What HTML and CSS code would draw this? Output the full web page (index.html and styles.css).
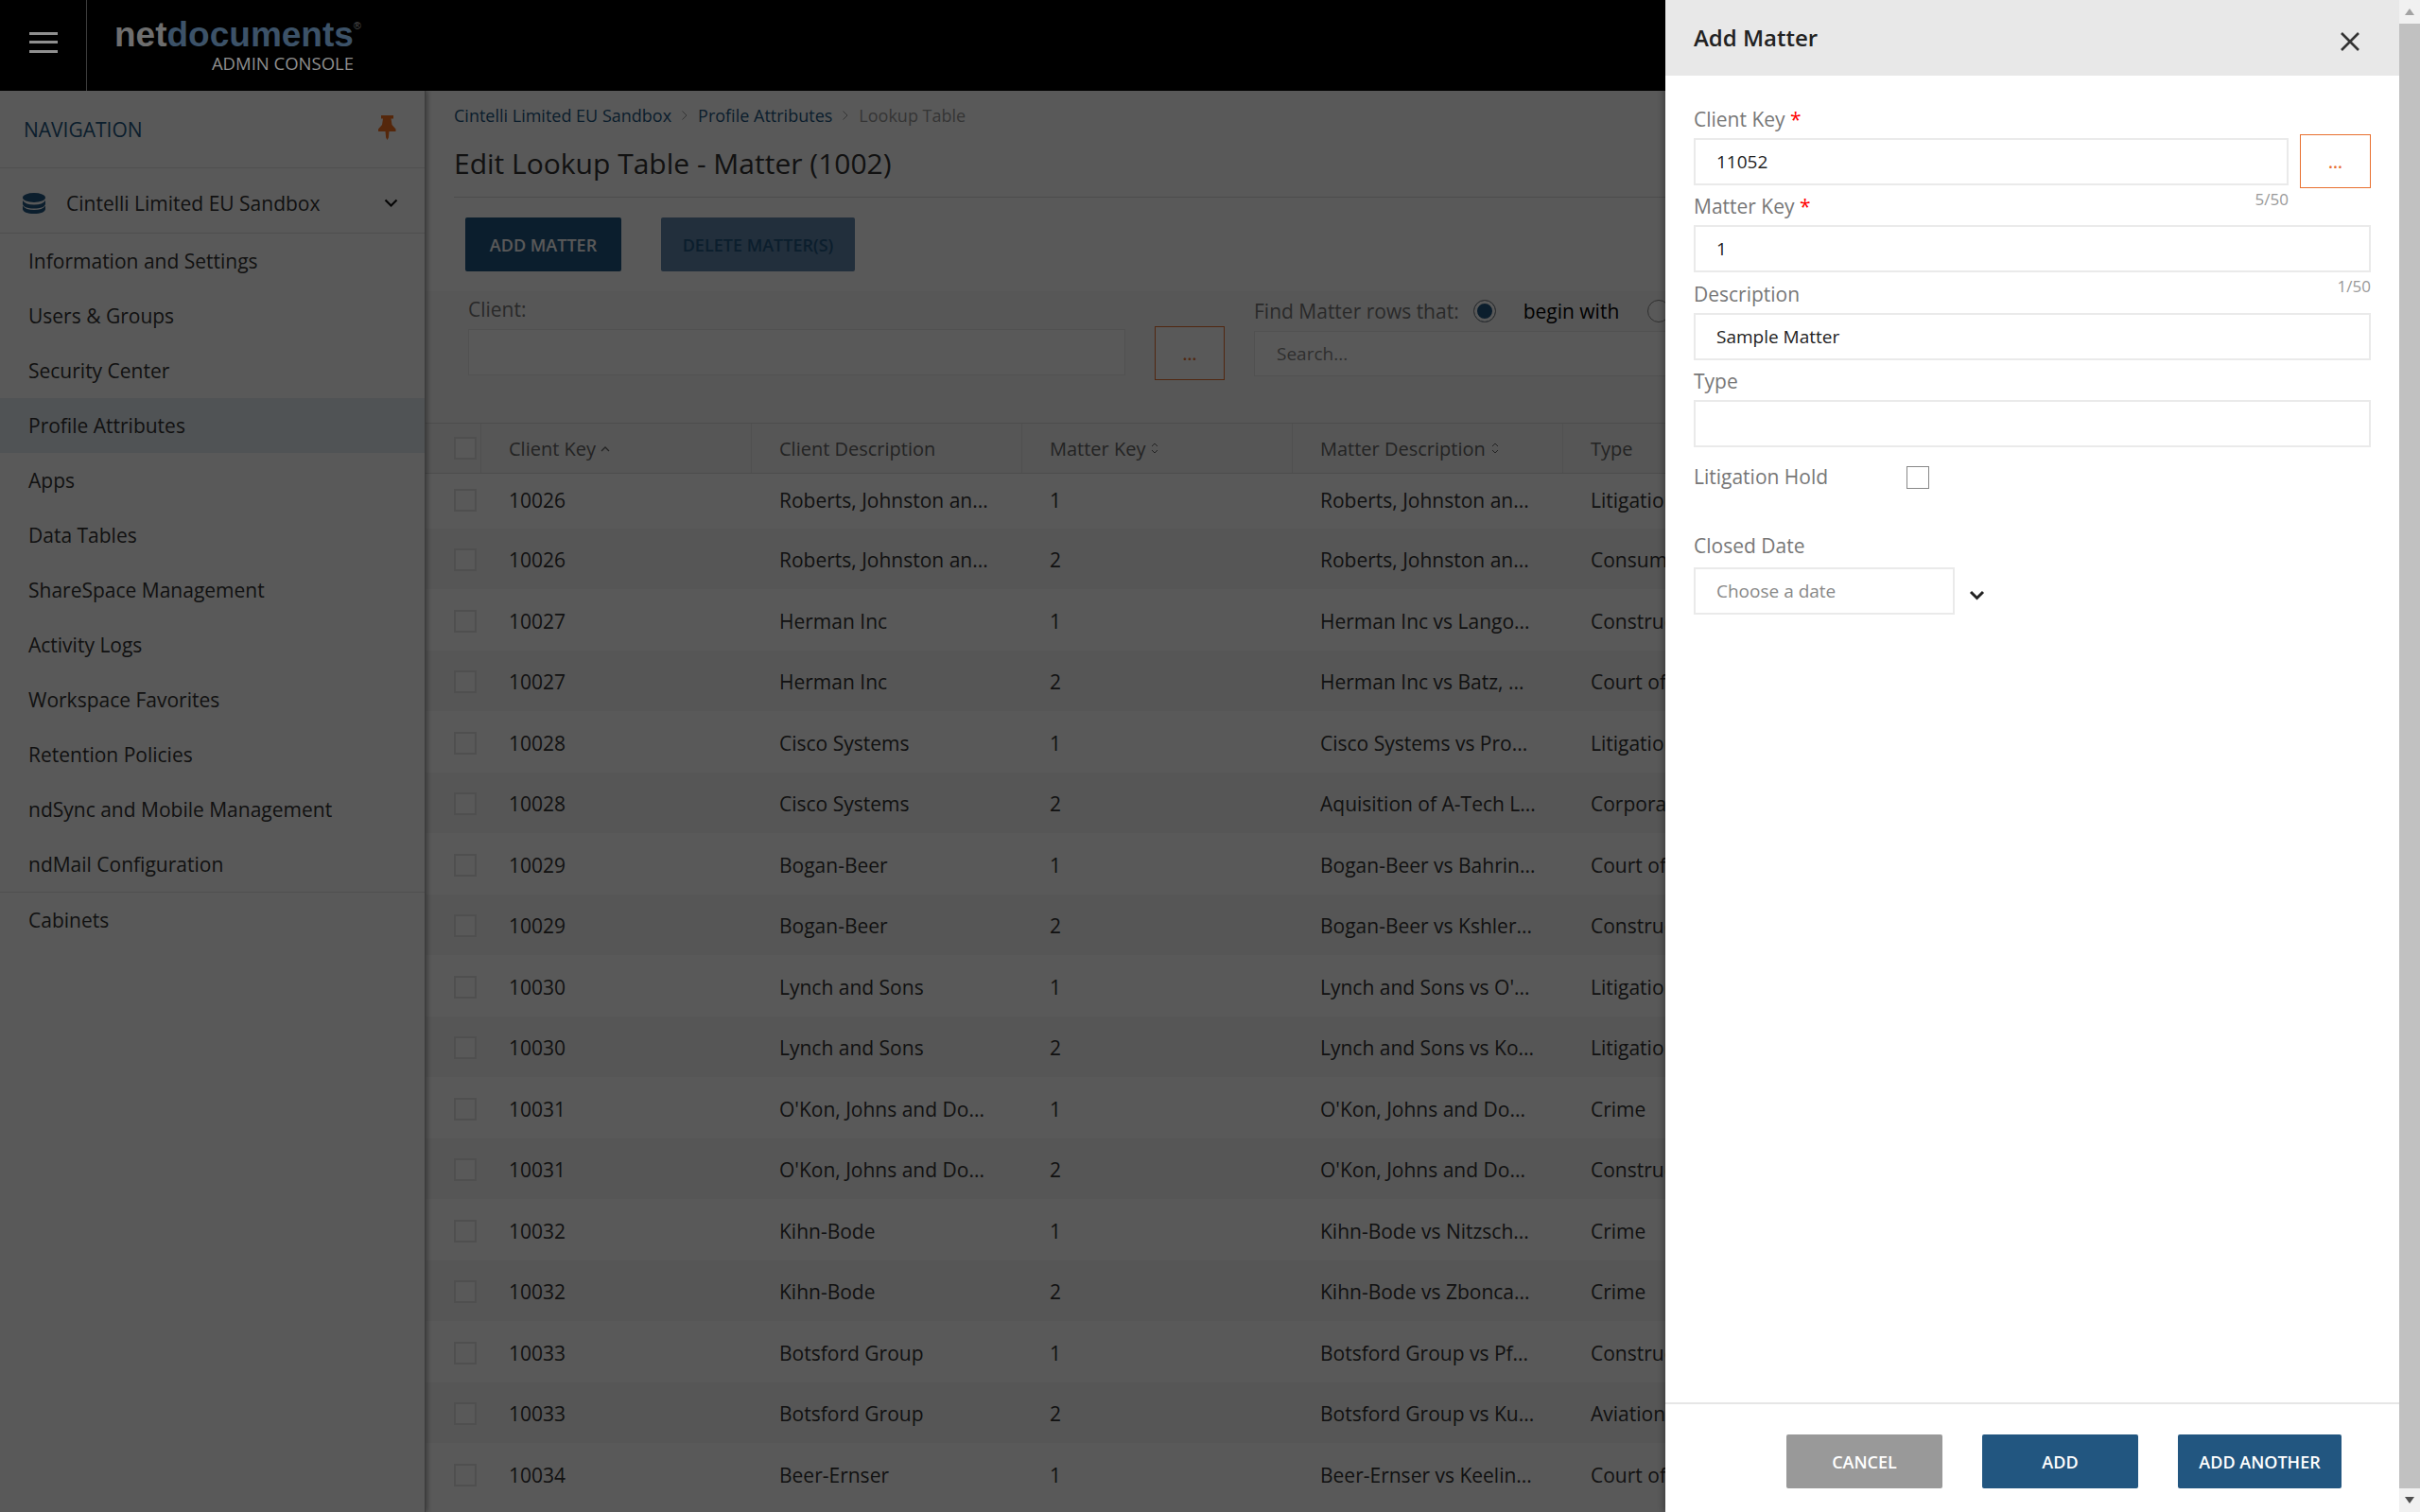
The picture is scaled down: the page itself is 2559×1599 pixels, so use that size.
FILE: index.html
```html
<!DOCTYPE html>
<html lang="en">
<head>
    <meta charset="UTF-8">
    <title>Edit Lookup Table - Matter (1002)</title>
    <link rel="stylesheet" href="styles.css">
</head>
<body>
    <div class="app">
        <header class="topbar">
            <div class="menu-cell">
                <div class="burger"><span></span><span></span><span></span></div>
            </div>
            <div class="logo">
                <div class="logo-name"><span class="logo-net">net</span><span class="logo-doc">documents</span><sup class="logo-reg">®</sup></div>
                <div class="logo-sub">ADMIN CONSOLE</div>
            </div>
        </header>

        <div class="columns">
            <nav class="sidebar">
                <div class="nav-head">
                    <span class="nav-title">NAVIGATION</span>
                    <svg class="pin" width="19" height="26" viewBox="0 0 19 26"><path d="M3 0h13v3.500h-2.500l1 6.500 4 4.500v2.500h-7l-.6 6.500-1.400 2.500-1.400-2.500-.6-6.500H0v-2.500l4-4.500 1-6.500H3z"/></svg>
                </div>
                <div class="nav-org">
                    <svg class="db" width="24" height="22" viewBox="0 0 24 22"><ellipse cx="12" cy="5" rx="12" ry="5"/><path d="M0 8c2 3 6 4.500 12 4.500S22 11 24 8v3.500c0 3-5 5-12 5s-12-2-12-5z"/><path d="M0 13.500c2 3 6 4.500 12 4.500s10-1.500 12-4.500V17c0 3-5 5-12 5S0 20 0 17z"/></svg>
                    <span class="org-name">Cintelli Limited EU Sandbox</span>
                    <svg class="chev" width="15" height="10" viewBox="0 0 15 10"><path d="M1.500 1.500l6 6 6-6" fill="none" stroke="currentColor" stroke-width="2.200"/></svg>
                </div>
                <ul class="nav-list">
                    <li>Information and Settings</li>
                    <li>Users &amp; Groups</li>
                    <li>Security Center</li>
                    <li class="active">Profile Attributes</li>
                    <li>Apps</li>
                    <li>Data Tables</li>
                    <li>ShareSpace Management</li>
                    <li>Activity Logs</li>
                    <li>Workspace Favorites</li>
                    <li>Retention Policies</li>
                    <li>ndSync and Mobile Management</li>
                    <li>ndMail Configuration</li>
                    <li class="divided">Cabinets</li>
                </ul>
            </nav>

            <main class="content">
                <div class="crumbs">
                    <a>Cintelli Limited EU Sandbox</a>
                    <svg width="8" height="12" viewBox="0 0 8 12"><path d="M1.500 1.500l4.500 4.500-4.500 4.500" fill="none" stroke="currentColor"/></svg>
                    <a>Profile Attributes</a>
                    <svg width="8" height="12" viewBox="0 0 8 12"><path d="M1.500 1.500l4.500 4.500-4.500 4.500" fill="none" stroke="currentColor"/></svg>
                    <span>Lookup Table</span>
                </div>
                <h1 class="page-title">Edit Lookup Table - Matter (1002)</h1>
                <div class="actions">
                    <button class="btn btn-primary">ADD MATTER</button>
                    <button class="btn btn-disabled">DELETE MATTER(S)</button>
                </div>

                <div class="filters">
                    <div class="filter-client">
                        <div class="filter-label">Client:</div>
                        <div class="box client-box"></div>
                    </div>
                    <button class="dots dots-filter">...</button>
                    <div class="filter-find">
                        <div class="find-row">
                            <span class="filter-label">Find Matter rows that:</span>
                            <span class="radio on"></span>
                            <span class="radio-text">begin with</span>
                            <span class="radio"></span>
                        </div>
                        <div class="box search-box">Search...</div>
                    </div>
                </div>

                <div class="grid">
                    <div class="row head">
                        <div class="cell"><span class="check"></span></div>
                        <div class="cell">Client Key<svg class="sort" width="10" height="7" viewBox="0 0 10 7"><path d="M1 6l4-4 4 4" fill="none" stroke="currentColor" stroke-width="1.300"/></svg></div>
                        <div class="cell">Client Description</div>
                        <div class="cell">Matter Key<svg class="sort" width="10" height="16" viewBox="0 0 10 16"><path d="M2 6l3-3 3 3M2 10l3 3 3-3" fill="none" stroke="currentColor"/></svg></div>
                        <div class="cell">Matter Description<svg class="sort" width="10" height="16" viewBox="0 0 10 16"><path d="M2 6l3-3 3 3M2 10l3 3 3-3" fill="none" stroke="currentColor"/></svg></div>
                        <div class="cell">Type</div>
                    </div>
                    <div class="row first"><div class="cell"><span class="check"></span></div><div class="cell">10026</div><div class="cell">Roberts, Johnston an...</div><div class="cell">1</div><div class="cell">Roberts, Johnston an...</div><div class="cell">Litigation</div></div>
                    <div class="row"><div class="cell"><span class="check"></span></div><div class="cell">10026</div><div class="cell">Roberts, Johnston an...</div><div class="cell">2</div><div class="cell">Roberts, Johnston an...</div><div class="cell">Consumer</div></div>
                    <div class="row"><div class="cell"><span class="check"></span></div><div class="cell">10027</div><div class="cell">Herman Inc</div><div class="cell">1</div><div class="cell">Herman Inc vs Lango...</div><div class="cell">Construction</div></div>
                    <div class="row"><div class="cell"><span class="check"></span></div><div class="cell">10027</div><div class="cell">Herman Inc</div><div class="cell">2</div><div class="cell">Herman Inc vs Batz, ...</div><div class="cell">Court of Appeal</div></div>
                    <div class="row"><div class="cell"><span class="check"></span></div><div class="cell">10028</div><div class="cell">Cisco Systems</div><div class="cell">1</div><div class="cell">Cisco Systems vs Pro...</div><div class="cell">Litigation</div></div>
                    <div class="row"><div class="cell"><span class="check"></span></div><div class="cell">10028</div><div class="cell">Cisco Systems</div><div class="cell">2</div><div class="cell">Aquisition of A-Tech L...</div><div class="cell">Corporate</div></div>
                    <div class="row"><div class="cell"><span class="check"></span></div><div class="cell">10029</div><div class="cell">Bogan-Beer</div><div class="cell">1</div><div class="cell">Bogan-Beer vs Bahrin...</div><div class="cell">Court of Appeal</div></div>
                    <div class="row"><div class="cell"><span class="check"></span></div><div class="cell">10029</div><div class="cell">Bogan-Beer</div><div class="cell">2</div><div class="cell">Bogan-Beer vs Kshler...</div><div class="cell">Construction</div></div>
                    <div class="row"><div class="cell"><span class="check"></span></div><div class="cell">10030</div><div class="cell">Lynch and Sons</div><div class="cell">1</div><div class="cell">Lynch and Sons vs O'...</div><div class="cell">Litigation</div></div>
                    <div class="row"><div class="cell"><span class="check"></span></div><div class="cell">10030</div><div class="cell">Lynch and Sons</div><div class="cell">2</div><div class="cell">Lynch and Sons vs Ko...</div><div class="cell">Litigation</div></div>
                    <div class="row"><div class="cell"><span class="check"></span></div><div class="cell">10031</div><div class="cell">O'Kon, Johns and Do...</div><div class="cell">1</div><div class="cell">O'Kon, Johns and Do...</div><div class="cell">Crime</div></div>
                    <div class="row"><div class="cell"><span class="check"></span></div><div class="cell">10031</div><div class="cell">O'Kon, Johns and Do...</div><div class="cell">2</div><div class="cell">O'Kon, Johns and Do...</div><div class="cell">Construction</div></div>
                    <div class="row"><div class="cell"><span class="check"></span></div><div class="cell">10032</div><div class="cell">Kihn-Bode</div><div class="cell">1</div><div class="cell">Kihn-Bode vs Nitzsch...</div><div class="cell">Crime</div></div>
                    <div class="row"><div class="cell"><span class="check"></span></div><div class="cell">10032</div><div class="cell">Kihn-Bode</div><div class="cell">2</div><div class="cell">Kihn-Bode vs Zbonca...</div><div class="cell">Crime</div></div>
                    <div class="row"><div class="cell"><span class="check"></span></div><div class="cell">10033</div><div class="cell">Botsford Group</div><div class="cell">1</div><div class="cell">Botsford Group vs Pf...</div><div class="cell">Construction</div></div>
                    <div class="row"><div class="cell"><span class="check"></span></div><div class="cell">10033</div><div class="cell">Botsford Group</div><div class="cell">2</div><div class="cell">Botsford Group vs Ku...</div><div class="cell">Aviation</div></div>
                    <div class="row"><div class="cell"><span class="check"></span></div><div class="cell">10034</div><div class="cell">Beer-Ernser</div><div class="cell">1</div><div class="cell">Beer-Ernser vs Keelin...</div><div class="cell">Court of Appeal</div></div>
                </div>
            </main>
        </div>

        <div class="overlay"></div>

        <aside class="panel">
            <div class="panel-head">
                <h2 class="panel-title">Add Matter</h2>
                <svg class="close" width="22" height="22" viewBox="0 0 22 22"><path d="M2 2l18 18M20 2L2 20" fill="none" stroke="currentColor" stroke-width="2.600"/></svg>
            </div>
            <div class="panel-form">
                <div class="field">
                    <label class="field-label">Client Key <span class="req">*</span></label>
                    <div class="client-row">
                        <input class="input" type="text" value="11052">
                        <button class="dots dots-panel">...</button>
                    </div>
                    <div class="counter counter-short">5/50</div>
                </div>
                <div class="field">
                    <label class="field-label">Matter Key <span class="req">*</span></label>
                    <input class="input" type="text" value="1">
                    <div class="counter">1/50</div>
                </div>
                <div class="field">
                    <label class="field-label">Description</label>
                    <input class="input" type="text" value="Sample Matter">
                </div>
                <div class="field">
                    <label class="field-label">Type</label>
                    <input class="input" type="text">
                </div>
                <div class="hold-row">
                    <span class="field-label hold-label">Litigation Hold</span>
                    <span class="hold-check"></span>
                </div>
                <div class="date-field">
                    <label class="field-label date-label">Closed Date</label>
                    <div class="date-row">
                        <input class="input date-input" type="text" placeholder="Choose a date">
                        <svg class="date-chev" width="17" height="11" viewBox="0 0 17 11"><path d="M2 2l6.500 6.500L15 2" fill="none" stroke="currentColor" stroke-width="3"/></svg>
                    </div>
                </div>
            </div>
            <div class="panel-foot">
                <button class="btn-foot btn-cancel">CANCEL</button>
                <button class="btn-foot btn-add">ADD</button>
                <button class="btn-foot btn-another">ADD ANOTHER</button>
            </div>
        </aside>
    </div>

    <div class="scrollbar">
        <div class="scroll-btn"><span class="arrow-up"></span></div>
        <div class="scroll-thumb"></div>
        <div class="scroll-btn"><span class="arrow-down"></span></div>
    </div>
</body>
</html>
```

FILE: styles.css
```css
/* Page */
html, body {
    height: 100%;
}

body {
    margin: 0;
    display: flex;
    overflow: hidden;
    font-family: "Open Sans", sans-serif;
    font-size: 21px;
    color: #333;
    background-color: #fff;
}

button, input {
    font-family: inherit;
}

.app {
    position: relative;
    flex: 1;
    min-width: 0;
    display: flex;
    flex-direction: column;
    overflow: hidden;
}

/* Top bar sits above the dim layer, its colours are already the dimmed ones */
.topbar {
    position: relative;
    z-index: 3;
    display: flex;
    height: 96px;
    flex: none;
    background-color: #000;
}

.menu-cell {
    width: 92px;
    box-sizing: border-box;
    padding-bottom: 7px;
    display: flex;
    align-items: center;
    justify-content: center;
    border-right: 1px solid #3d3d3d;
}

.burger {
    width: 30px;
}

.burger span {
    display: block;
    height: 3px;
    margin: 6.500px 0;
    background-color: #8f8f8f;
}

.logo {
    margin-left: 29px;
    width: 253px;
    padding-top: 18px;
}

.logo-name {
    font-family: "Liberation Sans", sans-serif;
    font-weight: bold;
    font-size: 37px;
    line-height: 37px;
    white-space: nowrap;
}

.logo-net {
    color: #6e6e6e;
}

.logo-doc {
    color: #3c5268;
}

.logo-reg {
    font-size: 11px;
    font-weight: normal;
    color: #555;
    vertical-align: 18px;
    line-height: 0;
}

.logo-sub {
    font-size: 18.500px;
    line-height: 22px;
    margin-top: 1px;
    color: #8f8f8f;
    text-align: right;
}

.columns {
    flex: 1;
    display: flex;
    min-height: 0;
}

/* Sidebar */
.sidebar {
    width: 450px;
    flex: none;
    box-sizing: border-box;
    border-right: 1px solid #aaa;
    box-shadow: 2px 0 5px rgba(0, 0, 0, 0.35);
    position: relative;
    z-index: 1;
    background-color: #fff;
}

.nav-head {
    height: 82px;
    box-sizing: border-box;
    display: flex;
    align-items: center;
    justify-content: space-between;
    padding: 0 30px 0 25px;
    border-bottom: 1px solid #e2e2e2;
}

.nav-title {
    font-size: 21px;
    font-weight: 500;
    color: #225680;
}

.pin {
    fill: #f37021;
    margin-top: -4px;
}

.nav-org {
    height: 69px;
    box-sizing: border-box;
    display: flex;
    align-items: center;
    padding: 5px 28px 0 24px;
    border-bottom: 1px solid #e2e2e2;
}

.db {
    fill: #225680;
    flex: none;
}

.org-name {
    flex: 1;
    margin-left: 22px;
}

.chev {
    color: #111;
}

.nav-list {
    list-style: none;
    margin: 0;
    padding: 0;
}

.nav-list li {
    height: 58px;
    line-height: 58px;
    padding-left: 30px;
}

.nav-list .active {
    background-color: #e6edf3;
    color: #333;
}

.nav-list .divided {
    border-top: 1px solid #e2e2e2;
    height: 59px;
    line-height: 59px;
}

/* Main content */
.content {
    flex: 1;
    min-width: 0;
    overflow: hidden;
}

.crumbs {
    display: flex;
    align-items: center;
    gap: 10px;
    height: 24px;
    margin: 14px 0 0 30px;
    font-size: 18px;
    color: #999;
    white-space: nowrap;
}

.crumbs a {
    color: #225680;
}

.page-title {
    margin: 19px 0 0 30px;
    padding-bottom: 15px;
    border-bottom: 1px solid #ddd;
    font-size: 30px;
    line-height: 40px;
    font-weight: 400;
    color: #333;
    white-space: nowrap;
}

.actions {
    display: flex;
    gap: 42px;
    margin: 21px 0 21px 42px;
}

.btn {
    height: 57px;
    border: none;
    border-radius: 2px;
    font-size: 18px;
    font-weight: 600;
    padding: 0;
}

.btn-primary {
    width: 165px;
    background-color: #225680;
    color: #fff;
}

.btn-disabled {
    width: 205px;
    background-color: #6186ab;
    color: #225680;
}

.filters {
    display: flex;
    height: 139px;
    padding-left: 45px;
    background-color: #fafafa;
    white-space: nowrap;
}

.filter-client {
    width: 695px;
    padding-top: 7px;
}

.filter-label {
    line-height: 24px;
    color: #777;
}

.box {
    box-sizing: border-box;
    border: 1px solid #e8e8e8;
    background-color: #fff;
    margin-top: 9px;
}

.client-box {
    height: 49px;
}

.dots {
    box-sizing: border-box;
    border: 1px solid #e8702f;
    background-color: #fff;
    color: #e8702f;
    padding: 0;
    font-size: 18px;
    font-weight: 600;
}

.dots-filter {
    width: 74px;
    height: 57px;
    margin: 37px 31px 0 31px;
}

.filter-find {
    padding-top: 9px;
}

.find-row {
    display: flex;
    align-items: center;
    height: 24px;
}

.radio {
    box-sizing: border-box;
    width: 24px;
    height: 24px;
    flex: none;
    border: 1px solid #888;
    border-radius: 50%;
    background-color: #fff;
    margin-left: 15px;
}

.radio.on {
    background-color: #225680;
    box-shadow: inset 0 0 0 3px #fff;
}

.radio-text {
    color: #000;
    margin: 0 15px 0 29px;
}

.search-box {
    width: 700px;
    height: 48px;
    line-height: 46px;
    padding-left: 23px;
    font-size: 19px;
    color: #888;
}

/* Table */
.row {
    display: grid;
    grid-template-columns: 58px repeat(5, 286px);
    box-sizing: border-box;
    height: 64.5px;
    padding-top: 3px;
    align-items: center;
}

.row:nth-child(odd) {
    background-color: #f7f7f7;
}

.row.first {
    height: 57.500px;
    padding: 0 0 2px;
}

.row.head {
    height: 54px;
    padding-top: 0;
    background-color: #f6f6f6;
    border-top: 1px solid #ddd;
    border-bottom: 1px solid #ddd;
    align-items: stretch;
    font-size: 20px;
    color: #666;
}

.cell {
    padding-left: 30px;
    white-space: nowrap;
    overflow: hidden;
}

.row .cell:first-child {
    overflow: visible;
    display: flex;
    align-items: center;
}

.head .cell {
    display: flex;
    align-items: center;
    padding-left: 29px;
    border-left: 1px solid #e6e6e6;
}

.head .cell:first-child {
    border-left: none;
    padding-left: 30px;
}

.sort {
    margin-left: 5px;
    flex: none;
}

.check {
    display: block;
    box-sizing: border-box;
    width: 24px;
    height: 24px;
    flex: none;
    border: 2px solid #e2e2e2;
    background-color: #fff;
}

/* Dim layer */
.overlay {
    position: absolute;
    inset: 0;
    z-index: 2;
    background-color: rgba(0, 0, 0, 0.65);
}

/* Add Matter panel */
.panel {
    position: absolute;
    top: 0;
    right: 0;
    bottom: 0;
    z-index: 4;
    width: 776px;
    display: flex;
    flex-direction: column;
    background-color: #fff;
    box-shadow: -2px 0 6px rgba(0, 0, 0, 0.3);
}

.panel-head {
    height: 80px;
    flex: none;
    display: flex;
    align-items: center;
    justify-content: space-between;
    padding: 0 41px 0 30px;
    background-color: #e8e8e8;
}

.panel-title {
    margin: 0 0 2px;
    font-size: 24px;
    font-weight: 600;
    color: #222;
}

.close {
    color: #333;
    margin-top: 8px;
}

.panel-form {
    flex: 1;
    padding: 35px 30px 0;
}

.field {
    margin-bottom: 11.330px;
}

.field-label {
    display: block;
    height: 24px;
    line-height: 23px;
    margin-bottom: 7px;
    color: #777;
}

.req {
    color: #f00;
}

.input {
    display: block;
    box-sizing: border-box;
    width: 100%;
    height: 50px;
    border: 2px solid #eaeaea;
    padding: 0 22px;
    font-size: 19px;
    color: #222;
    outline: none;
}

.input::placeholder {
    color: #888;
    opacity: 1;
}

.client-row {
    display: flex;
    align-items: center;
    gap: 12px;
}

.client-row .input {
    flex: 1;
    min-width: 0;
}

.dots-panel {
    width: 75px;
    height: 57px;
    flex: none;
    margin: -4px 0 -3px;
}

.counter {
    height: 0;
    margin-top: 7px;
    margin-bottom: -7px;
    font-size: 17px;
    line-height: 16px;
    color: #999;
    text-align: right;
}

.counter-short {
    margin-right: 87px;
}

.hold-row {
    display: flex;
    align-items: center;
    height: 24px;
    margin-top: 20px;
}

.hold-label {
    width: 225px;
    margin-bottom: 0;
}

.hold-check {
    box-sizing: border-box;
    width: 24px;
    height: 24px;
    border: 1px solid #888;
}

.date-field {
    margin-top: 49px;
}

.date-label {
    margin-bottom: 10px;
}

.date-row {
    display: flex;
    align-items: center;
}

.date-input {
    width: 276px;
}

.date-chev {
    margin: 9px 0 0 15px;
    color: #222;
}

.panel-foot {
    height: 116px;
    flex: none;
    box-sizing: border-box;
    display: flex;
    justify-content: flex-end;
    gap: 42px;
    padding: 32px 61px 0 0;
    border-top: 2px solid #e6e6e6;
}

.btn-foot {
    height: 57px;
    border: none;
    border-radius: 2px;
    color: #fff;
    font-size: 18px;
    font-weight: 600;
    padding: 0;
}

.btn-cancel {
    width: 165px;
    background-color: #999;
}

.btn-add {
    width: 165px;
    background-color: #225680;
}

.btn-another {
    width: 173px;
    background-color: #225680;
}

/* Window scrollbar */
.scrollbar {
    width: 22px;
    flex: none;
    display: flex;
    flex-direction: column;
    background-color: #f1f1f1;
}

.scroll-btn {
    height: 25px;
    flex: none;
    display: flex;
    align-items: center;
    justify-content: center;
}

.scroll-thumb {
    flex: 1;
    background-color: #c1c1c1;
}

.arrow-up {
    border: 5px solid transparent;
    border-top: none;
    border-bottom: 7px solid #a3a3a3;
}

.arrow-down {
    border: 5px solid transparent;
    border-bottom: none;
    border-top: 7px solid #505050;
}
```
